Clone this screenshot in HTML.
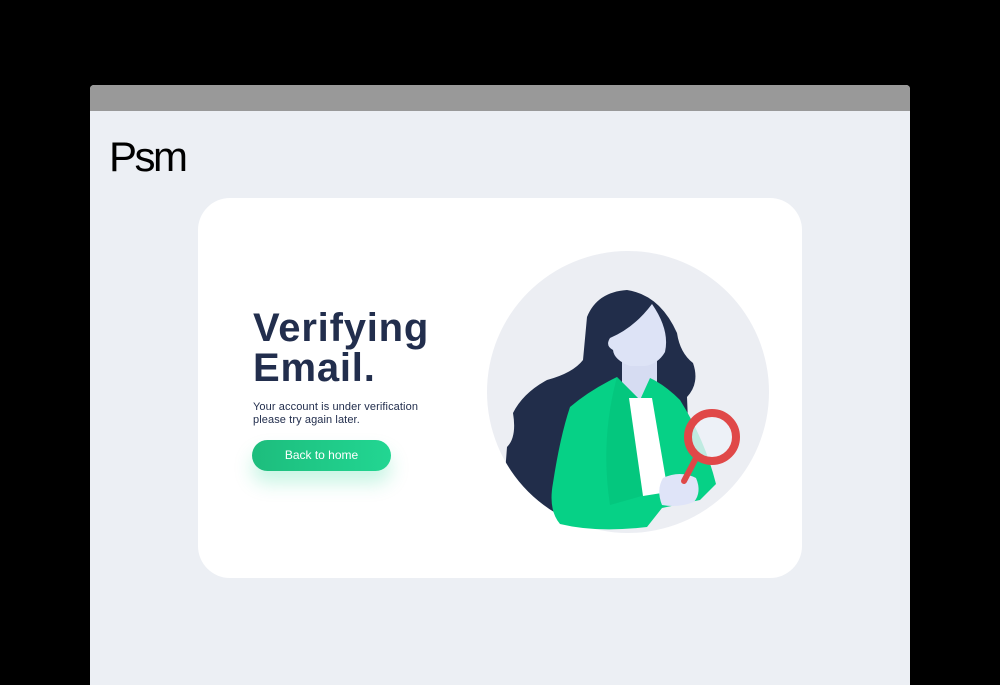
<!DOCTYPE html>
<html><head><meta charset="utf-8"><style>
*{margin:0;padding:0;box-sizing:border-box}
body{width:1000px;height:668px;background:#000;position:relative;overflow:hidden;font-family:"Liberation Sans",sans-serif}
.frame{position:absolute;left:90px;top:85px;width:820px;height:600px;background:#eceff4;border-radius:4px 4px 0 0;overflow:hidden}
.bar{height:26px;background:#999}
.logo{position:absolute;left:19px;top:51px;font-size:42px;letter-spacing:-2.5px;color:#000;line-height:1}
.card{position:absolute;left:198px;top:198px;width:604px;height:380px;background:#fff;border-radius:32px}
h1{position:absolute;left:253px;top:308px;font-size:40px;line-height:40px;color:#222e4d;font-weight:bold;letter-spacing:0.8px}
.sub{position:absolute;left:253px;top:401px;font-size:11px;line-height:12.5px;color:#222e4d;letter-spacing:0.1px}
.btn{position:absolute;left:252px;top:440px;width:139px;height:31px;border-radius:16px;background:linear-gradient(90deg,#1dbd7d,#22d692);color:#fff;font-size:12px;text-align:center;line-height:31px;box-shadow:0 12px 18px rgba(34,214,146,0.25)}
svg{position:absolute;left:0;top:0}
</style></head><body>
<div class="frame"><div class="bar"></div><div class="logo">Psm</div></div>
<div class="card"></div>
<h1>Verifying<br>Email.</h1>
<div class="sub">Your account is under verification<br>please try again later.</div>
<div class="btn">Back to home</div>
<svg width="1000" height="668" viewBox="0 0 1000 668">
<defs><clipPath id="c"><circle cx="628" cy="392" r="141"/></clipPath></defs>
<circle cx="628" cy="392" r="141" fill="#eceef3"/>
<g clip-path="url(#c)">
<path d="M587,317 Q597,292 627,290 Q660,295 677,333 Q680,353 693,363 Q700,383 687,397 L690,470 L560,540 L500,540 L507,447 Q517,437 513,413 Q523,393 547,380 Q573,373 583,360 Z" fill="#212d4a"/>
</g>
<path d="M622,355 L657,355 L657,395 Q640,410 622,395 Z" fill="#d6dcf2"/>
<path d="M652,304 Q670,330 665,352 Q658,364 645,366 L630,366 Q614,360 613,350 Q605,346 610,338 Q634,328 652,304 Z" fill="#dde3f6"/>
<path d="M617,377 Q590,390 570,407 Q560,437 553,483 Q548,510 560,524 Q597,533 647,527 L662,508 L700,500 L716,484 Q705,440 680,400 Q665,385 650,378 L640,400 Z" fill="#06d186"/>
<path d="M617,377 L640,400 L645,495 L610,505 Q600,440 617,377 Z" fill="#03c07a" opacity="0.6"/>
<path d="M629,398 L652,398 L668,492 L643,496 Z" fill="#fff"/>
<path d="M663,478 Q680,470 696,478 Q702,492 694,502 Q678,508 662,505 Q656,490 663,478 Z" fill="#dfe4f8"/>
<line x1="695" y1="460" x2="684" y2="481" stroke="#df4848" stroke-width="6" stroke-linecap="round"/>
<circle cx="712" cy="437" r="24" fill="#eef1f8" fill-opacity="0.8" stroke="#e04848" stroke-width="8"/>
</svg>
</body></html>
